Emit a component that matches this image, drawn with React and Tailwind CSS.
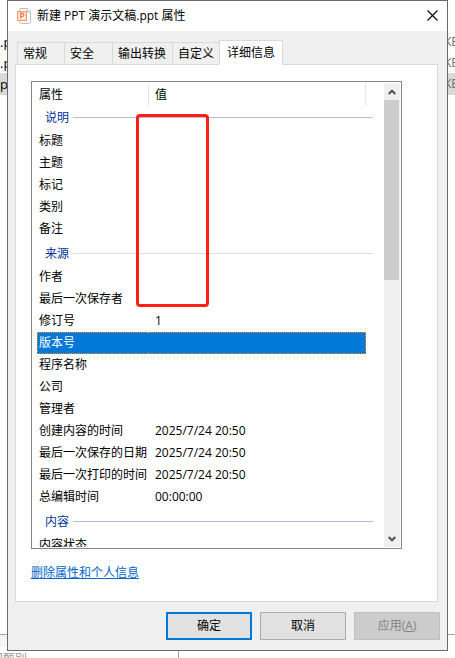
import { useState } from 'react';

const tabs = [
  { id: 'general', name: '常规', width: 'w-[47px]' },
  { id: 'security', name: '安全', width: 'w-12' },
  { id: 'convert', name: '输出转换', width: 'w-[60px]' },
  { id: 'custom', name: '自定义', width: 'w-[47px]' },
  { id: 'details', name: '详细信息', width: 'w-16' },
];

const sections = [
  {
    title: '说明',
    height: 'h-6',
    padding: 'pb-px',
    line: 'bg-[#b0bfdd]',
    rows: [
      { name: '标题', value: '' },
      { name: '主题', value: '' },
      { name: '标记', value: '' },
      { name: '类别', value: '' },
      { name: '备注', value: '' },
    ],
  },
  {
    title: '来源',
    height: 'h-[26px]',
    padding: 'pt-px',
    line: 'bg-[#d9dfea]',
    rows: [
      { name: '作者', value: '' },
      { name: '最后一次保存者', value: '' },
      { name: '修订号', value: '1' },
      { name: '版本号', value: '' },
      { name: '程序名称', value: '' },
      { name: '公司', value: '' },
      { name: '管理者', value: '' },
      { name: '创建内容的时间', value: '2025/7/24 20:50' },
      { name: '最后一次保存的日期', value: '2025/7/24 20:50' },
      { name: '最后一次打印的时间', value: '2025/7/24 20:50' },
      { name: '总编辑时间', value: '00:00:00' },
    ],
  },
  {
    title: '内容',
    height: 'h-[26px]',
    padding: 'pt-px',
    line: 'bg-[#b0bfdd]',
    rows: [{ name: '内容状态', value: '' }],
  },
];

function PptIcon() {
  return (
    <svg width="15" height="16" viewBox="0 0 15 16" fill="none" aria-hidden="true">
      <path d="M3.5 .5H10L13.5 4V13.5Q13.5 15.5 11.5 15.5H4.5Q2.5 15.5 2.5 13.5V2.5Q2.5 .5 4.5 .5Z" fill="#fff" stroke="#b9bcc2" />
      <path d="M10 .5V4H13.5" stroke="#b9bcc2" />
      <rect x=".5" y="3.5" width="9" height="9" fill="#fff" stroke="#ff9d68" />
      <rect x="1.5" y="4.5" width="7" height="7" stroke="#ffd9c2" />
      <path d="M3.6 10.8V5.5H5.4A1.5 1.5 0 0 1 5.4 8.5H3.6" stroke="#f47b3c" strokeWidth="1.3" />
    </svg>
  );
}

function Chevron({ down }) {
  return (
    <svg width="8" height="6" viewBox="0 0 8 6" fill="none" aria-hidden="true">
      <path d={down ? 'M.7 1L4 4.3L7.3 1' : 'M.7 5L4 1.7L7.3 5'} stroke="#505050" strokeWidth="2" />
    </svg>
  );
}

// File list of the explorer window behind the dialog
function Explorer() {
  return (
    <div className="absolute inset-0 flex flex-col overflow-hidden bg-white pt-[31px]" aria-hidden="true">
      {[false, false, true].map((selected, index) => (
        <div
          key={index}
          className={`flex h-[22px] items-center justify-between ${index < 2 ? '-mb-px' : ''} ${selected ? 'bg-[#d9d9d9]' : ''}`}
        >
          <span className="text-[13px]">{selected ? 'pt' : '.pt'}</span>
          <span className="-mr-1 text-[#6d6d6d]">KB</span>
        </div>
      ))}
      <div className="mt-auto h-6 border-t border-[#a0a0a0]">
        <div className="h-3 w-44 bg-[#f3f4f6]" />
        <div className="h-3 w-[179px] border-r border-[#a0a0a0] -indent-[9px] leading-6 text-[#999]">识甄别</div>
      </div>
    </div>
  );
}

function DetailRow({ row, selected, onSelect }) {
  const edge = selected ? 'border-dotted border-[#ff8728] bg-[#0078d7] text-white' : 'border-transparent';
  return (
    <tr className="h-[22px] cursor-default" onClick={() => onSelect(row.name)}>
      <td className={`h-[22px] whitespace-nowrap border-y border-l p-0 pl-px ${edge}`}>{row.name}</td>
      <td className={`h-[22px] whitespace-nowrap border-y border-r p-0 pl-[7px] ${edge}`}>{row.value}</td>
      <td className="p-0" />
    </tr>
  );
}

export default function App() {
  const [activeTab, setActiveTab] = useState('details');
  const [selected, setSelected] = useState('版本号');

  return (
    <div
      lang="zh-CN"
      className="relative min-h-screen overflow-hidden font-['Open_Sans','Noto_Sans_CJK_SC',sans-serif] text-xs leading-4 text-black"
    >
      <Explorer />

      <main className="relative mx-[7px] mb-[7px] flex flex-col border border-[#6b6b6b] bg-[#f0f0f0]">
        <header className="flex h-[30px] items-center bg-white px-[9px]">
          <PptIcon />
          <h1 className="ml-[5px] flex-1">新建 PPT 演示文稿.ppt 属性</h1>
          <button type="button" aria-label="关闭" className="flex h-6 w-3 items-center justify-center pb-0.5">
            <svg width="11" height="11" viewBox="0 0 11 11" aria-hidden="true">
              <path d="M.5 .5L10.5 10.5M10.5 .5L.5 10.5" stroke="#000" strokeWidth="1.1" />
            </svg>
          </button>
        </header>

        <div className="px-[7px] pt-[9px]">
          <div role="tablist" className="relative z-10 -mb-px flex items-end pl-0.5">
            {tabs.map((tab) => (
              <button
                key={tab.id}
                type="button"
                role="tab"
                aria-selected={activeTab === tab.id}
                onClick={() => setActiveTab(tab.id)}
                className={`shrink-0 whitespace-nowrap border border-[#d9d9d9] text-left ${tab.width} ${
                  activeTab === tab.id
                    ? 'h-[25px] border-b-white bg-white pl-[7px]'
                    : 'h-[23px] border-r-0 pl-[5px] pt-px'
                }`}
              >
                {tab.name}
              </button>
            ))}
          </div>

          <section className="mr-0.5 border border-[#d9d9d9] bg-white px-[15px] pb-5 pt-4">
            <div className="relative mr-5 flex h-[468px] border border-[#828790] py-px pl-[5px] pr-px">
              <div className="mr-[11px] flex-1 overflow-hidden">
                <table className="w-full table-fixed border-separate border-spacing-0">
                  <colgroup>
                    <col className="w-[111px]" />
                    <col />
                    <col className="w-[7px]" />
                  </colgroup>
                  <thead>
                    <tr className="h-[23px] text-left">
                      <th className="p-0 pl-0.5 font-normal">属性</th>
                      <th className="border-x border-[#e5e5e5] p-0 pl-1.5 font-normal">值</th>
                      <td className="p-0" />
                    </tr>
                  </thead>
                  {sections.map((section) => (
                    <tbody key={section.title}>
                      <tr className={section.height}>
                        <th colSpan={3} className={`px-0 pl-2 text-left font-normal text-[#003399] ${section.padding}`}>
                          <div className="flex items-center gap-1">
                            <span>{section.title}</span>
                            <span className={`h-px flex-1 ${section.line}`} />
                          </div>
                        </th>
                      </tr>
                      {section.rows.map((row) => (
                        <DetailRow key={row.name} row={row} selected={selected === row.name} onSelect={setSelected} />
                      ))}
                    </tbody>
                  ))}
                </table>
              </div>

              <div className="flex w-4 flex-col bg-[#f0f0f0]">
                <button type="button" aria-label="向上滚动" className="flex h-[17px] items-center justify-center">
                  <Chevron />
                </button>
                <div className="h-[180px] w-[15px] bg-[#cdcdcd]" />
                <button type="button" aria-label="向下滚动" className="mt-auto flex h-[17px] items-center justify-center">
                  <Chevron down />
                </button>
              </div>

              {/* highlight over the empty values */}
              <div className="pointer-events-none absolute left-[104px] top-8 h-[193px] w-[73px] rounded-sm border-3 border-[#ff2015]" />
            </div>

            <a href="#remove" className="mt-4 inline-block text-[#0066cc] underline">
              删除属性和个人信息
            </a>
          </section>
        </div>

        <footer className="flex justify-end gap-2 px-[7px] py-2.5">
          <button type="button" className="h-7 w-[86px] border-2 border-[#0078d7] bg-[#e1e1e1]">
            确定
          </button>
          <button type="button" className="h-7 w-[86px] border border-[#adadad] bg-[#e1e1e1]">
            取消
          </button>
          <button type="button" disabled className="h-7 w-[86px] border border-[#bfbfbf] bg-[#cccccc] text-[#838383]">
            应用(<u>A</u>)
          </button>
        </footer>
      </main>
    </div>
  );
}
